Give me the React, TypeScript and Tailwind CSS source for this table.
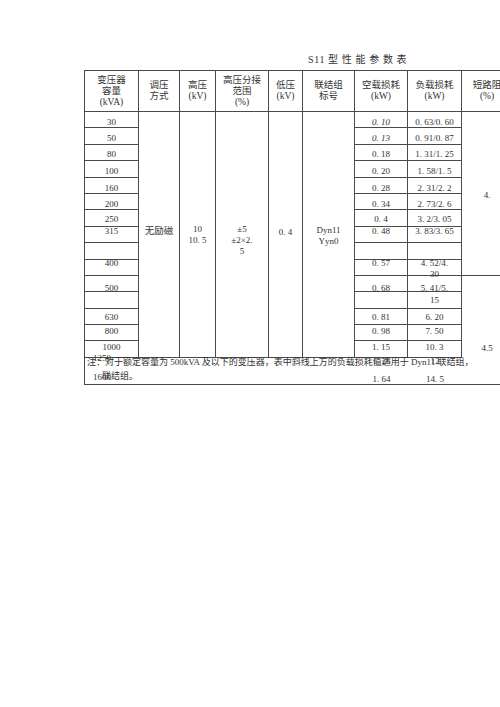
import React from "react";

type Row = { a: string; k: string; f: string[]; it?: boolean; pt: string };

const rows: Row[] = [
  { a: "30", k: "0. 10", f: ["0. 63/0. 60"], it: true, pt: "pt-[4.5px]" },
  { a: "50", k: "0. 13", f: ["0. 91/0. 87"], it: true, pt: "pt-[4.5px]" },
  { a: "80", k: "0. 18", f: ["1. 31/1. 25"], pt: "pt-[3.5px]" },
  { a: "100", k: "0. 20", f: ["1. 58/1. 5"], pt: "pt-[4.5px]" },
  { a: "160", k: "0. 28", f: ["2. 31/2. 2"], pt: "pt-[4.5px]" },
  { a: "200", k: "0. 34", f: ["2. 73/2. 6"], pt: "pt-[4.5px]" },
  { a: "250", k: "0. 4", f: ["3. 2/3. 05"], pt: "pt-[3.5px]" },
  { a: "315", k: "0. 48", f: ["3. 83/3. 65"], pt: "-mt-[1.5px]" },
  { a: "", k: "", f: [""], pt: "" },
  { a: "400", k: "0. 57", f: ["4. 52/4.", "30"], pt: "-mt-[2.5px]" },
  { a: "500", k: "0. 68", f: ["5. 41/5."], pt: "pt-[6.5px]" },
  { a: "", k: "", f: ["15"], pt: "pt-[2.5px]" },
  { a: "630", k: "0. 81", f: ["6. 20"], pt: "pt-[3px]" },
  { a: "800", k: "0. 98", f: ["7. 50"], pt: "pt-[0.5px]" },
  { a: "1000", k: "1. 15", f: ["10. 3"], pt: "pt-[0.5px]" },
];

const cell = "border-r border-b border-[#4a4a4a]";

function Head({ lines }: { lines: string[] }) {
  return (
    <div className={`${cell} flex flex-col items-center justify-center text-[9.5px] leading-[11px]`}>
      {lines.map((l, i) => (
        <span key={i} className="whitespace-nowrap">
          {l}
        </span>
      ))}
    </div>
  );
}

function Span({ lines, pt }: { lines: string[]; pt: string }) {
  return (
    <div className={`${cell} row-span-15 flex flex-col items-center leading-[11px] ${pt}`}>
      {lines.map((l, i) => (
        <span key={i} className="whitespace-nowrap">
          {l}
        </span>
      ))}
    </div>
  );
}

export default function App() {
  return (
    <div className="w-[500px] h-[707px] overflow-hidden bg-white text-[#333] font-['Liberation_Serif','Noto_Sans_CJK_SC',serif] pt-[54px]">
      <div className="pl-[308px] text-[10px] leading-[12px] tracking-[0.6px] whitespace-nowrap">
        S11 型 性 能 参 数 表
      </div>
      <div className="mt-[4px] ml-[84px] w-[428px] border-l border-t border-[#4a4a4a] grid grid-cols-[54px_41px_36px_53px_34px_52px_53px_54px_50px] grid-rows-[41px_16px_17px_16px_17px_16px_16px_17px_16px_17px_16px_16px_17px_16px_16px_17px_27px] text-[9px]">
        <Head lines={["变压器", "容量", "(kVA)"]} />
        <Head lines={["调压", "方式"]} />
        <Head lines={["高压", "(kV)"]} />
        <Head lines={["高压分接", "范围", "(%)"]} />
        <Head lines={["低压", "(kV)"]} />
        <Head lines={["联结组", "标号"]} />
        <Head lines={["空载损耗", "(kW)"]} />
        <Head lines={["负载损耗", "(kW)"]} />
        <div className="border-b border-[#4a4a4a] flex flex-col items-center justify-center text-[9.5px] leading-[11px]">
          <span className="whitespace-nowrap">短路阻</span>
          <span>(%)</span>
        </div>

        {rows.map((r, i) => (
          <React.Fragment key={i}>
            <div className={cell}>
              <div className={`text-center leading-[11px] whitespace-nowrap ${r.pt}`}>{r.a}</div>
            </div>
            {i === 0 && (
              <>
                <Span lines={["无励磁"]} pt="pt-[113.5px] text-[9.5px]" />
                <Span lines={["10", "10. 5"]} pt="pt-[111.5px]" />
                <Span lines={["±5", "±2×2.", "5"]} pt="pt-[111.5px]" />
                <Span lines={["0. 4"]} pt="pt-[114.5px]" />
                <Span lines={["Dyn11", "Yyn0"]} pt="pt-[112.5px]" />
              </>
            )}
            <div className={cell}>
              <div className={`text-center leading-[11px] whitespace-nowrap ${r.it ? "italic" : ""} ${r.pt}`}>
                {r.k}
              </div>
            </div>
            <div className={cell}>
              <div className={`flex flex-col items-center leading-[11px] whitespace-nowrap ${r.pt}`}>
                {r.f.map((t, j) => (
                  <span key={j}>{t}</span>
                ))}
              </div>
            </div>
            {i === 0 && (
              <div className="row-span-10 border-b border-[#4a4a4a] flex items-center justify-center leading-[11px] pt-[3px]">
                4.
              </div>
            )}
            {i === 10 && (
              <div className="row-span-5 flex items-end justify-center leading-[11px] pb-[4.5px]">4.5</div>
            )}
          </React.Fragment>
        ))}

        <div className="col-span-9 border-b border-[#4a4a4a] relative">
          <div className="-mt-[3px] pl-[2px] leading-[14px] text-[9px] whitespace-nowrap">
            <div>注：对于额定容量为 500kVA 及以下的变压器，表中斜线上方的负载损耗值适用于 Dyn11 联结组，</div>
            <div className="pl-[15px]">联结组。</div>
          </div>
          <span className="absolute left-[8px] -top-[5.5px] leading-[11px]">1250</span>
          <span className="absolute left-[8px] top-[13.5px] leading-[11px]">1600</span>
          <span className="absolute left-[270px] w-[53px] text-center -top-[2.5px] leading-[11px]">1. 26</span>
          <span className="absolute left-[270px] w-[53px] text-center top-[15.5px] leading-[11px]">1. 64</span>
          <span className="absolute left-[323px] w-[54px] text-center -top-[2.5px] leading-[11px]">12</span>
          <span className="absolute left-[323px] w-[54px] text-center top-[15.5px] leading-[11px]">14. 5</span>
        </div>
      </div>
    </div>
  );
}
